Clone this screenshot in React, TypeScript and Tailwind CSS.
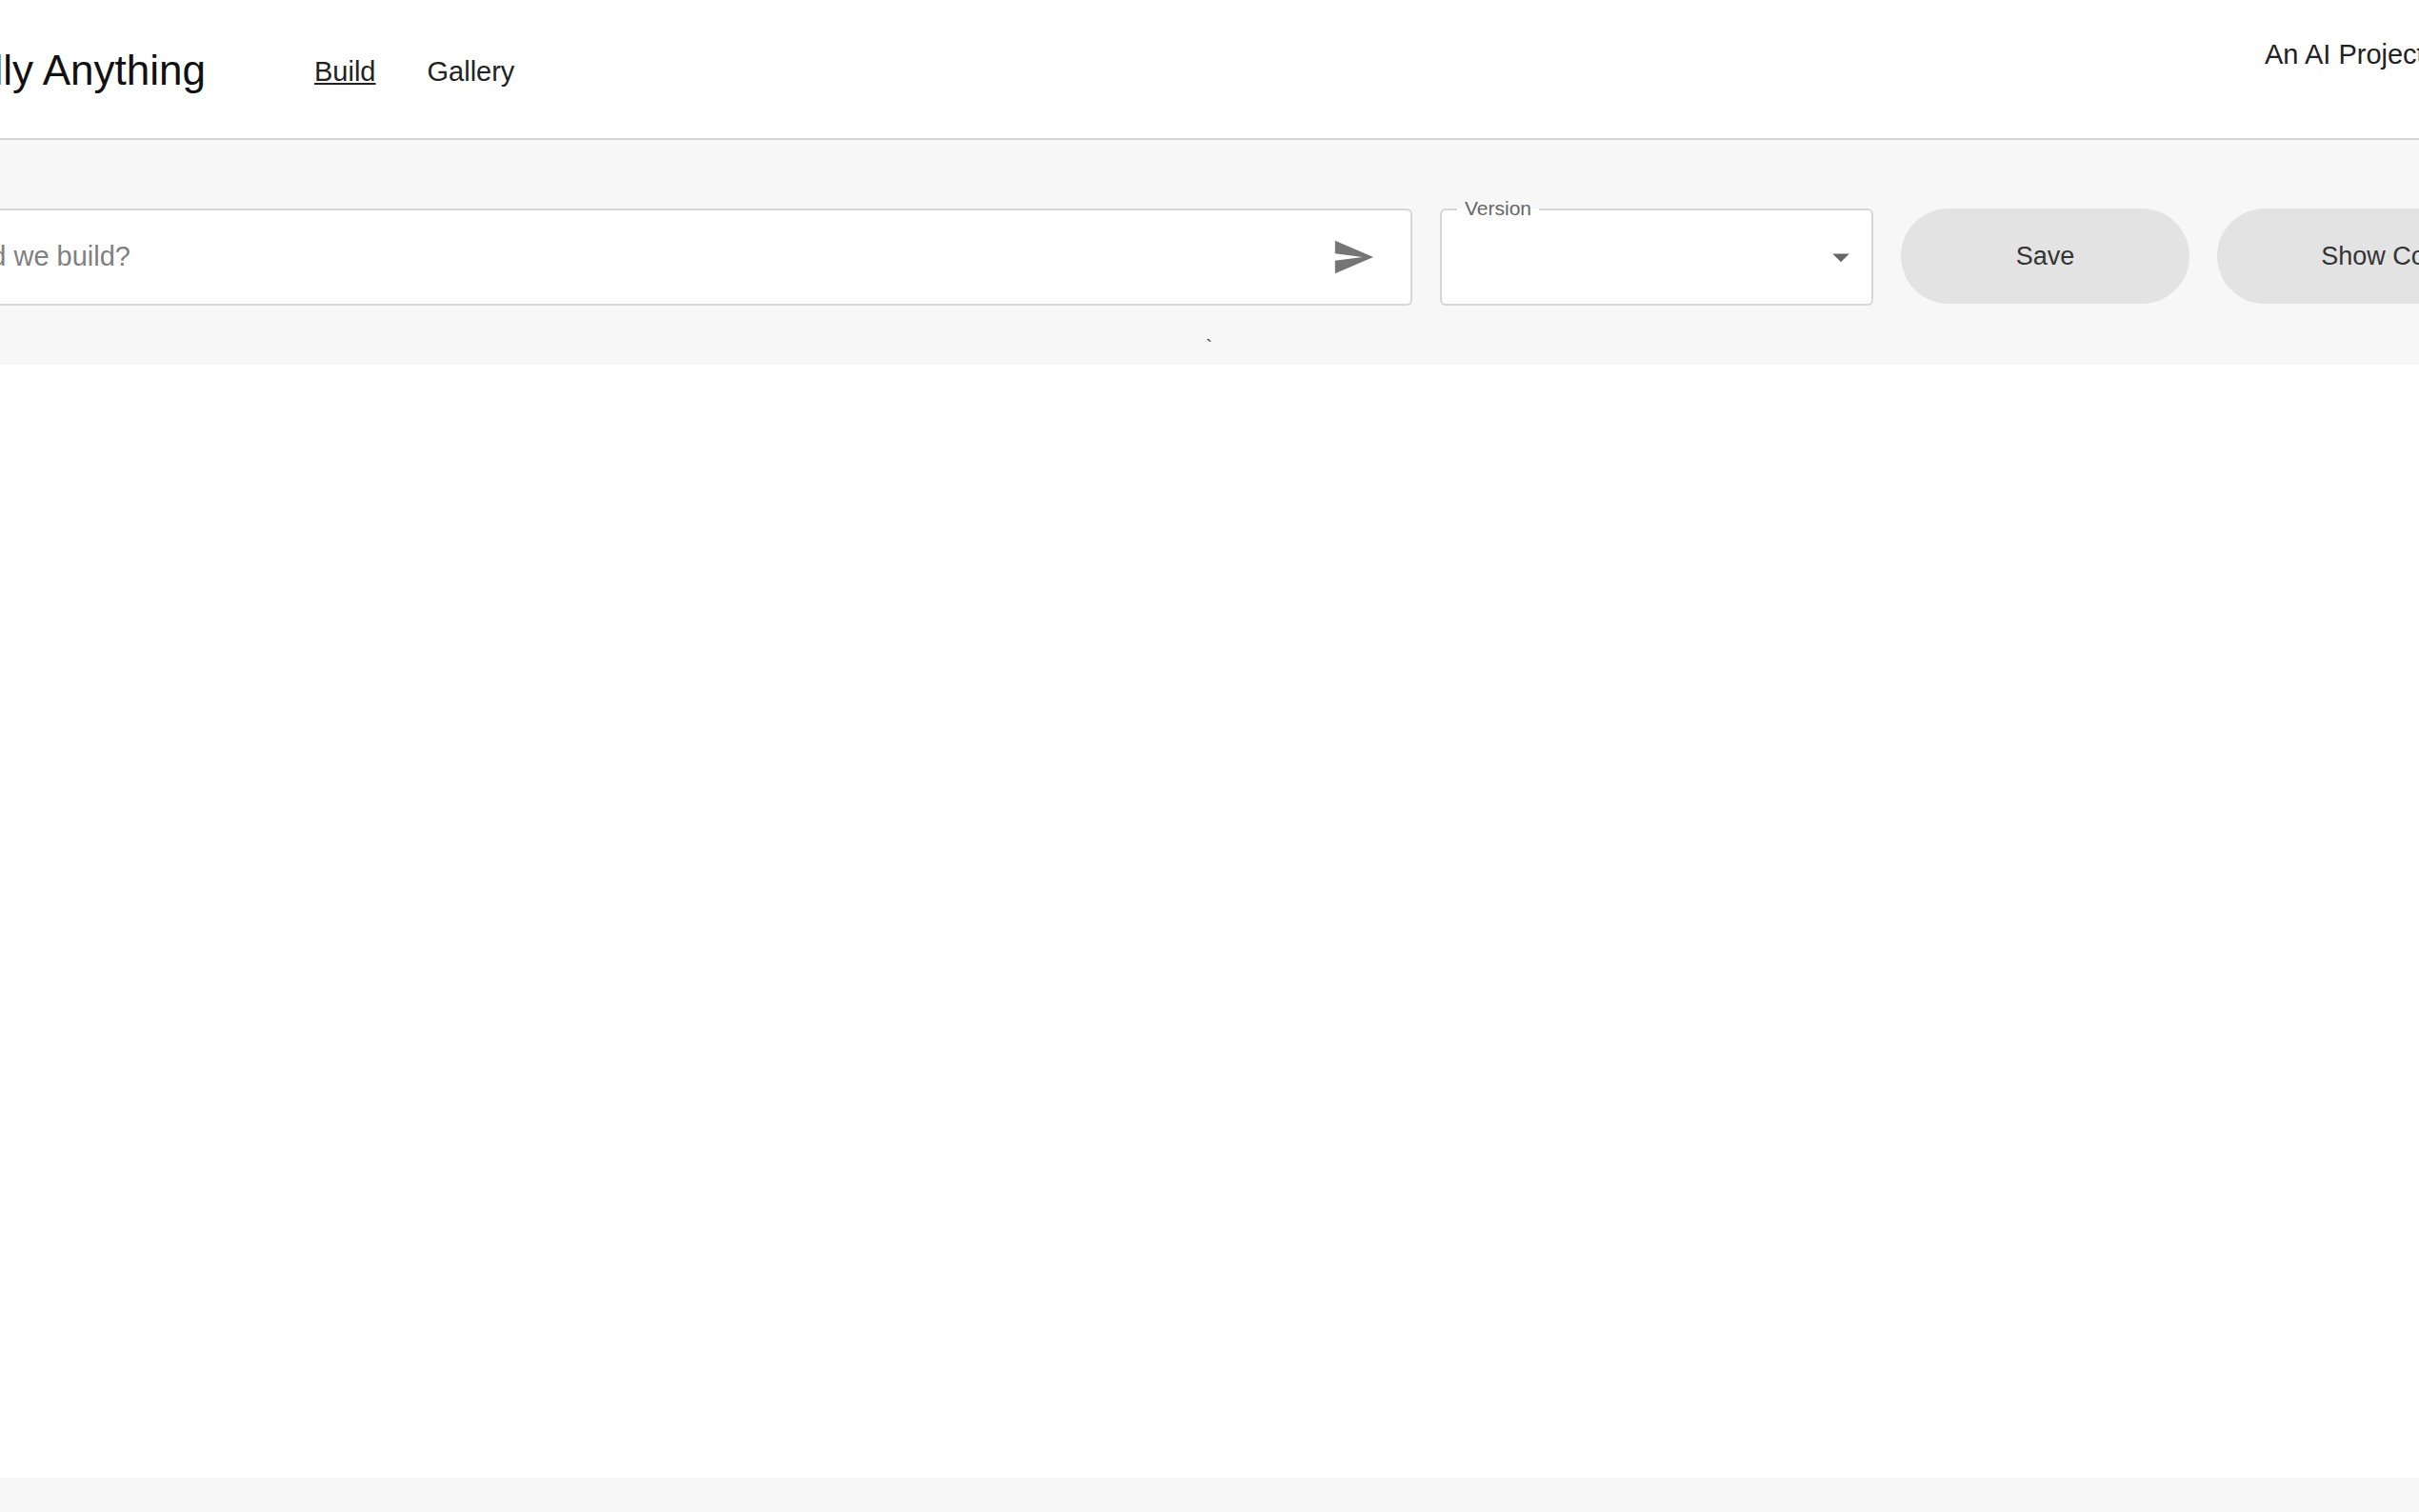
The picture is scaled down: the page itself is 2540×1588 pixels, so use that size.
const font = { fontFamily: '"Liberation Sans", Arial, sans-serif' };

function SendIcon() {
  return (
    <svg viewBox="0 0 24 24" className="w-[46px] h-[46px] fill-[#757575]">
      <path d="M2.01 21 23 12 2.01 3 2 10l15 2-15 2z" />
    </svg>
  );
}

function CaretIcon() {
  return (
    <svg viewBox="0 0 24 24" className="w-[42px] h-[42px] fill-[#666666]">
      <path d="M7 10l5 5 5-5z" />
    </svg>
  );
}

export default function App() {
  return (
    <div className="h-screen w-[2540px] overflow-hidden flex flex-col bg-[#fefefe] text-[#111111]" style={font}>
      {/* Header */}
      <header className="h-[147px] shrink-0 flex border-b-2 border-[#d4d4d4] bg-white">
        <div className="w-[216px] shrink-0 overflow-hidden flex justify-end items-center pt-[3px]">
          <h1 className="text-[44px] font-normal whitespace-nowrap leading-none">Literally Anything</h1>
        </div>
        <nav className="ml-[114px] flex items-center gap-[54px] text-[29px] pt-[6px]">
          <a className="underline text-[#222222]">Build</a>
          <a className="text-[#222222]">Gallery</a>
        </nav>
        <div className="ml-auto w-[162px] pt-[40px] text-[29px] leading-[34px] whitespace-nowrap text-[#222222]">An AI Project</div>
      </header>

      {/* Toolbar */}
      <section className="h-[235px] shrink-0 relative flex items-start gap-[29px] pt-[72px] bg-[#f7f7f7] border-b border-[#efefef]">
        <div className="w-[1483px] h-[102px] shrink-0 flex items-center justify-end pr-[37px] bg-white border-2 border-l-0 border-[#d6d6d6] rounded-r-[6px] relative">
          <span className="absolute right-[1344px] text-[29px] whitespace-nowrap text-[#808080]">What should we build?</span>
          <SendIcon />
        </div>
        <div className="w-[455px] h-[102px] shrink-0 relative flex items-center justify-end pr-[11px] bg-white border-2 border-[#d6d6d6] rounded-[6px]">
          <span className="absolute left-[16px] -top-[14px] px-[8px] bg-gradient-to-b from-[#f7f7f7] from-50% to-white to-50% text-[21px] leading-[24px] text-[#666666]">Version</span>
          <CaretIcon />
        </div>
        <button className="w-[303px] h-[100px] shrink-0 rounded-full bg-[#e3e3e3] text-[27px] text-[#333333]">Save</button>
        <button className="w-[358px] h-[100px] shrink-0 rounded-full bg-[#e3e3e3] text-[27px] text-[#333333]">Show Code</button>
        <span className="absolute left-[1266px] top-[205px] text-[21px] leading-[24px] text-[#444444]">`</span>
      </section>

      {/* Empty canvas */}
      <main className="flex-1" />

      <footer className="h-[36px] shrink-0 bg-[#f6f6f6]" />
    </div>
  );
}
